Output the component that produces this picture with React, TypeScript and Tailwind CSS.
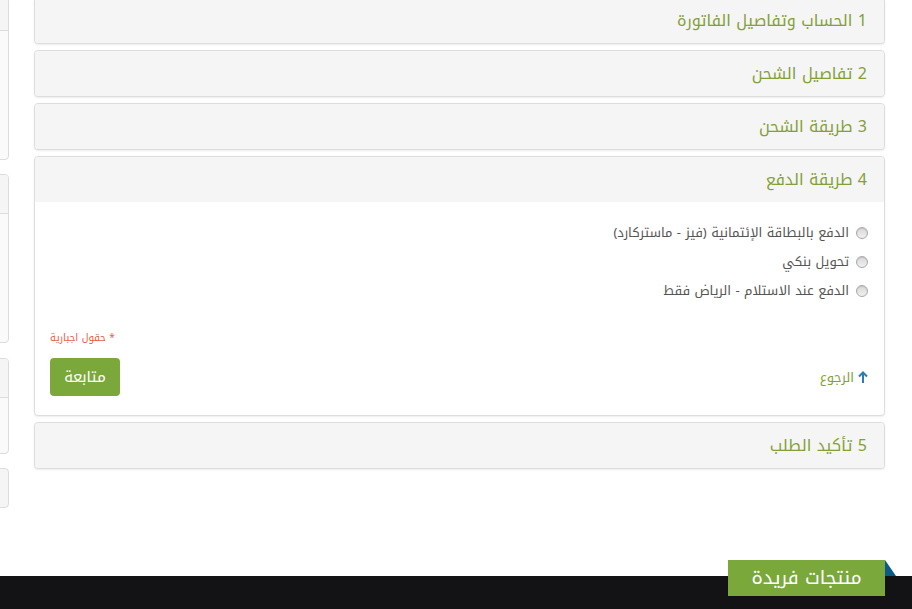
import React from "react";

const font = { fontFamily: '"Noto Kufi Arabic", "Noto Sans Arabic", "DejaVu Sans", "Noto Sans", sans-serif' };

function SidePanel({ header, body, mb }: { header: string; body: string; mb: string }) {
  return (
    <div className={`shrink-0 w-[40px] rounded-[4px] border border-[#dcdcdc] bg-[#fafafa] overflow-hidden ${mb}`}>
      <div className={`${header} bg-[#f5f5f5] border-b border-[#dcdcdc]`} />
      <div className={body} />
    </div>
  );
}

function Head({ n, title }: { n: string; title: string }) {
  return (
    <div className="h-[45px] bg-[#f5f5f5] flex items-center px-[17px] text-[16px] text-[#83a035]">
      <span>{n} {title}</span>
    </div>
  );
}

function Collapsed({ n, title }: { n: string; title: string }) {
  return (
    <div className="rounded-[4px] border border-[#dddddd] shadow-[0_1px_2px_rgba(0,0,0,0.08)] overflow-hidden bg-[#f5f5f5]">
      <Head n={n} title={title} />
    </div>
  );
}

function Radio({ label }: { label: string }) {
  return (
    <label className="flex items-center gap-[7px] h-[29px] text-[13px] text-[#555]">
      <span className="w-[12px] h-[12px] rounded-full border border-[#a9a9a9] bg-gradient-to-b from-[#d8d8d8] to-[#f0f0f0] shadow-[inset_0_1px_1px_rgba(0,0,0,0.1)]" />
      <span>{label}</span>
    </label>
  );
}

export default function App() {
  return (
    <div className="w-[912px] h-[609px] overflow-hidden bg-white relative" style={font}>
      <div className="flex flex-col h-full">
        <div className="flex flex-1 mt-[-3px]">
          <div className="shrink-0 w-[40px] ml-[-31px] mr-[25px] flex flex-col">
            <SidePanel header="h-[33px]" body="h-[128px]" mb="mb-[14px]" />
            <SidePanel header="h-[39px]" body="h-[128px]" mb="mb-[15px]" />
            <SidePanel header="h-[39px]" body="h-[55px]" mb="mb-[14px]" />
            <div className="shrink-0 w-[40px] h-[40px] rounded-[4px] border border-[#dcdcdc] bg-[#f5f5f5]" />
          </div>
          <div dir="rtl" className="shrink-0 w-[851px] flex flex-col gap-[6px]">
            <Collapsed n="1" title="الحساب وتفاصيل الفاتورة" />
            <Collapsed n="2" title="تفاصيل الشحن" />
            <Collapsed n="3" title="طريقة الشحن" />
            <div className="rounded-[4px] border border-[#dddddd] shadow-[0_1px_2px_rgba(0,0,0,0.08)] overflow-hidden bg-white">
              <Head n="4" title="طريقة الدفع" />
              <div className="h-[213px] px-[16px] pt-[16px]">
                <Radio label="الدفع بالبطاقة الإئتمانية (فيز - ماستركارد)" />
                <Radio label="تحويل بنكي" />
                <Radio label="الدفع عند الاستلام - الرياض فقط" />
                <div className="flex flex-row-reverse justify-start mt-[25px] text-[10px] text-[#e5604a] ml-[-1px]">
                  <span>* حقول اجبارية</span>
                </div>
                <div className="flex items-center justify-between mt-[13px]">
                  <a className="flex items-center gap-[4px] text-[13px] text-[#83a035] mt-[1px]">
                    <svg width="10" height="13" viewBox="0 0 10 13">
                      <path d="M5 12V2M1 5.5L5 1.5L9 5.5" stroke="#2b7bb9" strokeWidth="2" fill="none" />
                    </svg>
                    <span>الرجوع</span>
                  </a>
                  <button className="w-[70px] h-[38px] rounded-[4px] bg-[#7aa83b] text-white text-[15px] ml-[-1px]">متابعة</button>
                </div>
              </div>
            </div>
            <Collapsed n="5" title="تأكيد الطلب" />
          </div>
        </div>
        <div className="relative h-[33px] bg-[#131315]">
          <div className="absolute left-[728px] top-[-16px] w-[157px] h-[36px] bg-[#7aa83b] flex items-center justify-center text-white text-[19px]">
            منتجات فريدة
          </div>
          <svg className="absolute left-[885px] top-[-16px]" width="11" height="16" viewBox="0 0 11 16">
            <polygon points="0,0 0,16 11,16" fill="#0c5a86" />
          </svg>
        </div>
      </div>
    </div>
  );
}
